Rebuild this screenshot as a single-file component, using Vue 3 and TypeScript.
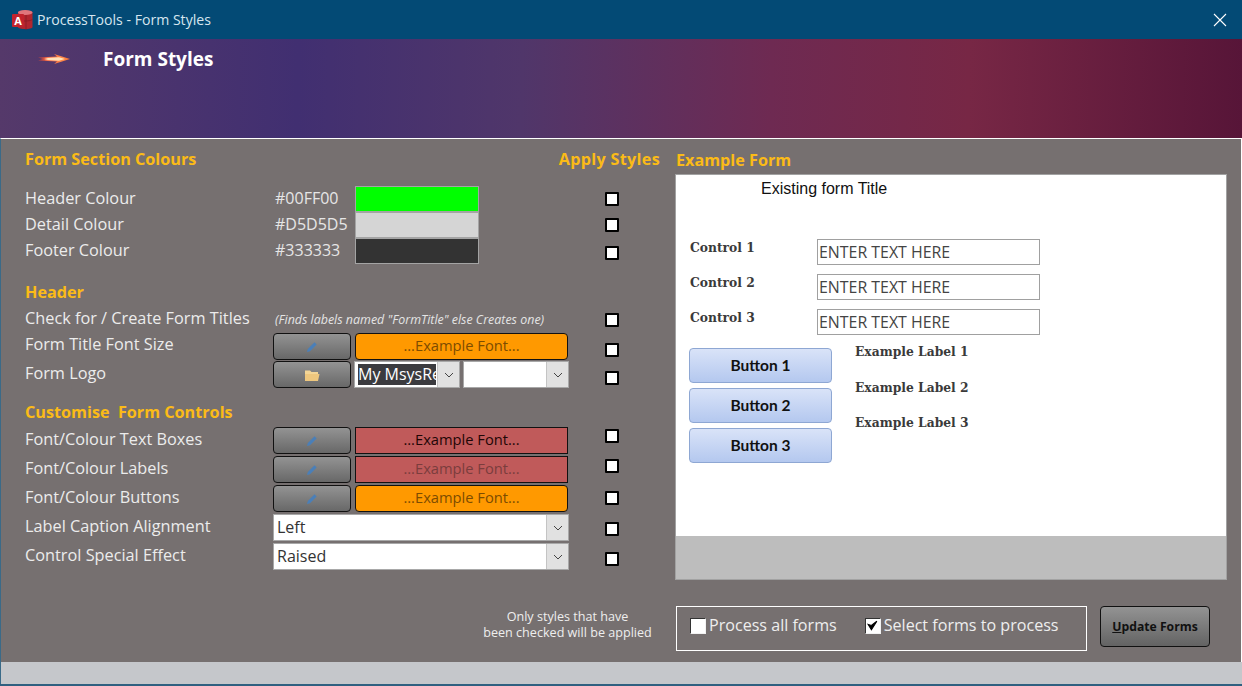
<template>
  <div class="window">
    <div class="titlebar">
      <svg class="app-icon" viewBox="0 0 22 22" width="22" height="22">
        <path d="M7 3.500c0-2.800 14.500-2.800 14.500 0v14.500c0 2.800-14.500 2.800-14.500 0z" fill="#b0262f" />
        <path d="M15 6v15M7 10.500c3 2 11 2 14.500 0" stroke="#8a1a24" stroke-width="0.8" fill="none" />
        <ellipse cx="14.200" cy="3.500" rx="7.300" ry="2.600" fill="#e0757c" />
        <rect x="1" y="5" width="12" height="13" rx="1" fill="#c2232d" />
        <text x="7" y="15.500" class="app-letter" text-anchor="middle">A</text>
      </svg>
      <span class="app-title">ProcessTools - Form Styles</span>
      <svg class="close" viewBox="0 0 14 14" width="14" height="14">
        <path d="M1 1l12 12M13 1L1 13" stroke="#fff" stroke-width="1.100" fill="none" />
      </svg>
    </div>

    <div class="banner">
      <svg class="flame" viewBox="0 0 32 10" width="32" height="10">
        <defs>
          <linearGradient id="flameFill" x1="0" x2="1" y1="0" y2="0">
            <stop offset="0" stop-color="#e2452f" stop-opacity="0.5" />
            <stop offset="0.3" stop-color="#f8603a" />
            <stop offset="0.75" stop-color="#ff8a4a" />
            <stop offset="1" stop-color="#f7702f" />
          </linearGradient>
        </defs>
        <path d="M0 3.500l19-1-3-2.500 16 5-16 5 3-2.500-19-1 5-1.500z" fill="url(#flameFill)" />
        <path d="M6 4l15-.8 6 1.800-6 1.800L6 6l4-1z" fill="#ffe3b8" />
      </svg>
      <span class="banner-title">Form Styles</span>
    </div>

    <div class="detail">
      <div class="settings">
        <div class="heading-row">
          <span class="heading">Form Section Colours</span>
          <span class="heading apply-head">Apply Styles</span>
        </div>

        <div class="colours">
          <div v-for="c in colours" :key="c.label" class="row colour-row">
            <span class="label">{{ c.label }}</span>
            <div class="colour-cell">
              <span class="hex">{{ c.hex }}</span>
              <span class="swatch" :style="{ background: c.hex }"></span>
            </div>
            <span class="check" :class="c.nudge"></span>
          </div>
        </div>

        <div class="heading section-head">Header</div>
        <div class="row">
          <span class="label">Check for / Create Form Titles</span>
          <span class="hint">(Finds labels named "FormTitle" else Creates one)</span>
          <span class="check"></span>
        </div>
        <div class="row title-size-row">
          <span class="label lifted">Form Title Font Size</span>
          <div class="controls">
            <button class="tool">
              <svg viewBox="0 0 12 12" width="12" height="12"><path d="M1 11l.8-3L8.500 1.300l2.200 2.200L4 10.200z" fill="#4a7fb8" /></svg>
            </button>
            <div class="font-box orange">...Example Font...</div>
          </div>
          <span class="check down-3"></span>
        </div>
        <div class="row">
          <span class="label">Form Logo</span>
          <div class="controls">
            <button class="tool">
              <svg viewBox="0 0 16 14" width="16" height="14">
                <path d="M1 2.500h5l1.500 1.500H14v2H1z" fill="#f3d596" />
                <path d="M1 13V6h14.500L14 13z" fill="#eec77e" />
              </svg>
            </button>
            <div class="combo logo-combo first-combo">
              <span class="combo-value"><span class="selected">My MsysRe</span></span>
              <span class="combo-arrow"><svg viewBox="0 0 10 6" width="10" height="6"><path d="M1 1l4 4 4-4" stroke="#444" fill="none" /></svg></span>
            </div>
            <div class="combo logo-combo">
              <span class="combo-value"></span>
              <span class="combo-arrow"><svg viewBox="0 0 10 6" width="10" height="6"><path d="M1 1l4 4 4-4" stroke="#444" fill="none" /></svg></span>
            </div>
          </div>
          <span class="check down-3"></span>
        </div>

        <div class="heading section-head custom-head">Customise&nbsp; Form Controls</div>
        <div class="custom-rows">
          <div v-for="f in fontRows" :key="f.label" class="row">
            <span class="label">{{ f.label }}</span>
            <div class="controls">
              <button class="tool">
                <svg viewBox="0 0 12 12" width="12" height="12"><path d="M1 11l.8-3L8.500 1.300l2.200 2.200L4 10.200z" fill="#4a7fb8" /></svg>
              </button>
              <div class="font-box" :class="f.kind">...Example Font...</div>
            </div>
            <span class="check" :class="f.nudge"></span>
          </div>
          <div v-for="s in selectRows" :key="s.label" class="row">
            <span class="label">{{ s.label }}</span>
            <div class="combo wide-combo">
              <span class="combo-value">{{ s.value }}</span>
              <span class="combo-arrow"><svg viewBox="0 0 10 6" width="10" height="6"><path d="M1 1l4 4 4-4" stroke="#444" fill="none" /></svg></span>
            </div>
            <span class="check" :class="s.nudge"></span>
          </div>
        </div>
      </div>

      <div class="preview">
        <div class="heading preview-head">Example Form</div>
        <div class="sample-form">
          <div class="sample-body">
            <div class="sample-title">Existing form Title</div>
            <div class="sample-controls">
              <div v-for="n in 3" :key="n" class="sample-row">
                <span class="fancy sample-label">Control {{ n }}</span>
                <span class="sample-input">ENTER TEXT HERE</span>
              </div>
            </div>
            <div class="sample-lower">
              <div class="sample-buttons">
                <div v-for="n in 3" :key="n" class="sample-button">Button {{ n }}</div>
              </div>
              <div class="sample-labels">
                <span v-for="n in 3" :key="n" class="fancy">Example Label {{ n }}</span>
              </div>
            </div>
          </div>
          <div class="sample-footer"></div>
        </div>
        <div class="actions">
          <div class="note">Only styles that have<br />been checked will be applied</div>
          <div class="options">
            <label class="option"><span class="opt-box"></span>Process all forms</label>
            <label class="option"><span class="opt-box">
              <svg viewBox="0 0 12 12" width="13" height="13"><path d="M2 5l3 5 5-8-5 4z" fill="#000" stroke="#000" /></svg>
            </span>Select forms to process</label>
          </div>
          <button class="update"><u>U</u>pdate Forms</button>
        </div>
      </div>
    </div>

    <div class="footer"></div>
  </div>
</template>

<script setup lang="ts">
interface ColourRow {
  label: string
  hex: string
  nudge: string
}

interface FontRow {
  label: string
  kind: string
  nudge: string
}

interface SelectRow {
  label: string
  value: string
  nudge: string
}

const colours: ColourRow[] = [
  { label: 'Header Colour', hex: '#00FF00', nudge: '' },
  { label: 'Detail Colour', hex: '#D5D5D5', nudge: '' },
  { label: 'Footer Colour', hex: '#333333', nudge: 'down-2' }
]

const fontRows: FontRow[] = [
  { label: 'Font/Colour Text Boxes', kind: 'red', nudge: 'up-4' },
  { label: 'Font/Colour Labels', kind: 'red faded', nudge: 'up-3' },
  { label: 'Font/Colour Buttons', kind: 'orange', nudge: 'up-1' }
]

const selectRows: SelectRow[] = [
  { label: 'Label Caption Alignment', value: 'Left', nudge: 'down-1' },
  { label: 'Control Special Effect', value: 'Raised', nudge: 'down-2b' }
]
</script>

<style scoped>
.window {
  width: 1242px;
  height: 686px;
  display: flex;
  flex-direction: column;
  background: #2f6080;
  font-family: "Open Sans", "Noto Sans", sans-serif;
  overflow: hidden;
}
.titlebar {
  height: 39px;
  flex: none;
  display: flex;
  align-items: center;
  padding: 0 15px 0 11px;
  background: #034a75;
  color: #d6e6ef;
  font-size: 14.100px;
}
.app-icon {
  margin-right: 4px;
}
.app-letter {
  font: bold 11px "Open Sans", sans-serif;
  fill: #fff;
}
.app-title {
  flex: 1;
}
.banner {
  height: 99px;
  flex: none;
  box-sizing: border-box;
  padding: 10px 0 0 38px;
  display: flex;
  align-items: flex-start;
  background: linear-gradient(91deg, #55396a 0, #412f71 24%, #50366a 42%, #6e2a52 62%, #772745 78%, #571538 100%);
}
.flame {
  margin-top: 5px;
}
.banner-title {
  margin-left: 33px;
  color: #fff;
  font-size: 19px;
  font-weight: 700;
  line-height: 21px;
}
.detail {
  height: 524px;
  flex: none;
  box-sizing: border-box;
  display: flex;
  background: #767070;
  border-top: 1px solid #fff;
  border-right: 1px solid #fff;
  border-left: 1px solid #3a6a88;
}
.settings {
  width: 659px;
  flex: none;
  box-sizing: border-box;
  padding: 9px 0 0 24px;
}
.heading-row {
  display: flex;
  justify-content: space-between;
  height: 22px;
}
.heading {
  color: #fbbb17;
  font-size: 16.200px;
  font-weight: 700;
  line-height: 22px;
}
.apply-head {
  letter-spacing: 0.300px;
}
.colours {
  margin-top: 16px;
}
.row {
  display: grid;
  grid-template-columns: 248px 296px 86px;
  align-items: center;
  height: 27px;
}
.colour-row {
  height: 26px;
}
.title-size-row {
  margin-bottom: 1px;
}
.custom-rows {
  display: flex;
  flex-direction: column;
  gap: 2px;
}
.label {
  margin-bottom: 3px;
  color: #ececec;
  font-size: 16.300px;
  white-space: nowrap;
}
.lifted {
  margin-bottom: 5px;
}
.colour-cell {
  display: flex;
  align-items: center;
  height: 100%;
  padding-left: 2px;
}
.hex {
  width: 80px;
  margin-bottom: 3px;
  color: #e6e6e6;
  font-size: 16px;
}
.swatch {
  box-sizing: border-box;
  width: 124px;
  height: 100%;
  border: 1px solid #a4a4a4;
}
.hint {
  padding-left: 2px;
  color: #e4e4e4;
  font-size: 12.450px;
  font-style: italic;
  white-space: nowrap;
}
.check {
  justify-self: center;
  box-sizing: border-box;
  width: 14px;
  height: 14px;
  background: #fff;
  border: 2px solid #000;
  border-radius: 1px;
}
.down-1 {
  margin-top: 3px;
}
.down-2 {
  margin-top: 4px;
}
.down-2b {
  margin-top: 5px;
}
.down-3 {
  margin-top: 6px;
}
.up-1 {
  margin-bottom: 2px;
}
.up-3 {
  margin-bottom: 7px;
}
.up-4 {
  margin-bottom: 10px;
}
.section-head {
  margin-top: 17px;
  margin-bottom: 3px;
}
.custom-head {
  margin-top: 13px;
  margin-bottom: 4px;
}
.controls {
  display: flex;
  height: 100%;
}
.tool {
  flex: none;
  width: 78px;
  height: 100%;
  padding: 0;
  margin-right: 4px;
  border: 1px solid #111;
  border-radius: 4px;
  background: linear-gradient(#939393, #686868);
}
.tool svg {
  vertical-align: middle;
}
.font-box {
  flex: 1;
  box-sizing: border-box;
  margin-right: 1px;
  border: 1px solid #111;
  text-align: center;
  font-size: 14.700px;
  line-height: 23px;
}
.orange {
  background: #ff9900;
  border-radius: 4px;
  color: #7d4c00;
}
.red {
  background: #c05a5a;
  color: #1f0606;
}
.faded {
  color: #7b3d3d;
}
.combo {
  display: flex;
  box-sizing: border-box;
  height: 100%;
  border: 1px solid #a8a8a8;
  background: #fff;
}
.logo-combo {
  width: 106px;
}
.first-combo {
  margin-left: -1px;
  margin-right: 3px;
}
.wide-combo {
  width: 296px;
}
.combo-value {
  flex: 1;
  min-width: 0;
  overflow: hidden;
  padding-left: 3px;
  color: #333;
  font-size: 16px;
  line-height: 25px;
  white-space: nowrap;
}
.selected {
  display: block;
  width: 78px;
  margin-top: 2px;
  overflow: hidden;
  background: #3b3b3f;
  color: #fff;
  line-height: 21px;
}
.combo-arrow {
  flex: none;
  width: 21px;
  display: flex;
  align-items: center;
  justify-content: center;
  border-left: 1px solid #c4c4c4;
  background: #e1e1e1;
}
.preview {
  flex: 1;
  box-sizing: border-box;
  padding: 10px 13px 0 15px;
}
.preview-head {
  height: 25px;
  margin-left: 1px;
}
.sample-form {
  box-sizing: border-box;
  width: 552px;
  height: 406px;
  display: flex;
  flex-direction: column;
  border: 1px solid #a2a2a2;
  background: #fff;
}
.sample-body {
  flex: 1;
  padding: 0 13px;
}
.sample-title {
  height: 28px;
  margin-left: 72px;
  color: #111;
  font: 16px/28px "Liberation Sans", sans-serif;
}
.sample-controls {
  margin-top: 36px;
  display: flex;
  flex-direction: column;
  gap: 9px;
}
.sample-row {
  display: flex;
  height: 26px;
}
.fancy {
  color: #3a3a3a;
  font: 700 12.300px/16px "DejaVu Serif", serif;
  white-space: nowrap;
}
.sample-label {
  width: 127px;
  flex: none;
  margin-left: 1px;
  margin-top: 1px;
}
.sample-input {
  box-sizing: border-box;
  width: 223px;
  border: 1px solid #a0a0a0;
  padding-left: 1px;
  color: #444;
  font-size: 15.900px;
  line-height: 24px;
}
.sample-lower {
  display: flex;
  margin-top: 13px;
}
.sample-buttons {
  width: 143px;
  display: flex;
  flex-direction: column;
  gap: 5px;
}
.sample-button {
  height: 35px;
  box-sizing: border-box;
  border: 1px solid #8ea7d3;
  border-radius: 4px;
  background: linear-gradient(#d9e3f8, #b4c8ef);
  color: #111;
  text-align: center;
  font: 700 15.500px/33px Lato, sans-serif;
}
.sample-labels {
  margin-left: 23px;
  margin-top: -4px;
  display: flex;
  flex-direction: column;
  gap: 19.500px;
}
.sample-footer {
  height: 43px;
  flex: none;
  background: #bdbdbd;
}
.actions {
  display: flex;
  align-items: flex-start;
  margin-top: 26px;
  margin-left: -195px;
}
.note {
  width: 175px;
  margin-top: 3px;
  color: #eee;
  text-align: center;
  font-size: 12.600px;
  line-height: 16px;
}
.options {
  box-sizing: border-box;
  width: 411px;
  height: 45px;
  margin-left: 21px;
  padding: 8px 0 0 13px;
  display: flex;
  gap: 28px;
  border: 1px solid #fff;
}
.option {
  display: flex;
  align-items: flex-start;
  color: #eee;
  font-size: 16.100px;
  line-height: 20px;
}
.opt-box {
  box-sizing: border-box;
  width: 16px;
  height: 16px;
  margin: 3px 3px 0 0;
  background: #fff;
  border: 1px solid;
  border-color: #333 #f2f2f2 #f2f2f2 #333;
  display: flex;
}
.update {
  width: 110px;
  height: 41px;
  margin-left: 13px;
  padding: 0;
  border: 1px solid #111;
  border-radius: 4px;
  background: linear-gradient(#939393, #636363);
  color: #111;
  font-family: "Open Sans", sans-serif;
  font-size: 12.200px;
  font-weight: 700;
}
.footer {
  height: 22px;
  flex: none;
  border-left: 1px solid #3a6a88;
  background: #c5c7cb;
}
</style>

<style>
html,
body {
  margin: 0;
  background: #2f6080;
}
</style>
